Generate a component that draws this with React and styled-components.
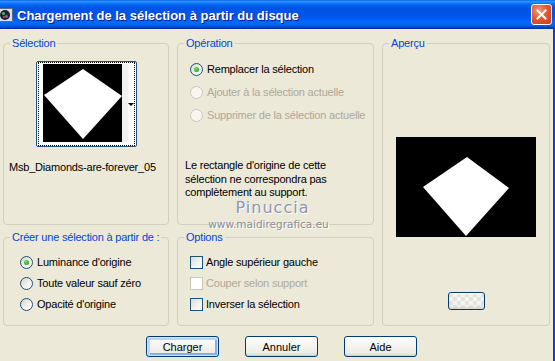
import React from "react";
import styled, { createGlobalStyle } from "styled-components";

const Global = createGlobalStyle`
  html, body { margin: 0; padding: 0; background: #ece9d8; overflow: hidden; }
  * { box-sizing: border-box; }
`;

const Window = styled.div`
  position: relative;
  width: 555px;
  height: 361px;
  display: flex;
  flex-direction: column;
  background: #ece9d8;
  font-family: "Liberation Sans", Arial, sans-serif;
  font-size: 11px;
  letter-spacing: -0.2px;
  color: #000;
`;

const TitleBar = styled.div`
  height: 29px;
  flex: none;
  display: flex;
  align-items: center;
  padding-right: 3px;
  letter-spacing: 0;
  background: linear-gradient(
    to bottom,
    #0058ee 0%, #3593ff 4%, #288eff 7%, #127dff 10%, #036ffc 14%,
    #0262ee 18%, #0057e5 24%, #0054e3 30%, #0055eb 56%, #005bf5 66%,
    #026afe 76%, #0062ef 86%, #0052d6 92%, #0040ab 96%, #003092 100%
  );
`;

const TitleIcon = styled.svg`
  flex: none;
  margin-left: -1px;
  margin-top: 1px;
`;

const TitleText = styled.div`
  flex: 1;
  margin-left: 4px;
  margin-top: 1px;
  color: #fff;
  font-family: "Liberation Sans", Arial, sans-serif;
  font-weight: bold;
  font-size: 13px;
  text-shadow: 1px 1px 0 #0a1a8a;
  white-space: nowrap;
`;

const CloseButton = styled.div`
  width: 21px;
  height: 21px;
  border: 1px solid #fff;
  border-radius: 3px;
  display: flex;
  align-items: center;
  justify-content: center;
  background: radial-gradient(circle at 35% 30%, #f29a7c 0%, #e25a33 45%, #c9391a 100%);
`;

const Frame = styled.div`
  flex: 1;
  display: flex;
  flex-direction: column;
  border-right: 2px solid #0a3fd6;
`;

const Body = styled.div`
  display: grid;
  grid-template-columns: 166px 197px 168px;
  grid-template-rows: 188px 95px;
  column-gap: 8px;
  row-gap: 6px;
  padding: 8px 0 0 3px;
`;

const Group = styled.fieldset`
  margin: 0;
  padding: 0;
  min-width: 0;
  border: 1px solid #d0d0bf;
  border-radius: 4px;
  grid-column: ${(p) => p.$col};
  grid-row: ${(p) => p.$row};
`;

const Legend = styled.legend`
  margin-left: 6px;
  padding: 0 2px;
  font-size: 11px;
  line-height: 13px;
  white-space: nowrap;
  color: #0046d5;
`;

const SelectionInner = styled.div`
  display: flex;
  flex-direction: column;
  align-items: center;
  padding-top: 11px;
`;

const Thumb = styled.div`
  width: 101px;
  height: 86px;
  border: 1px solid #1c5180;
  border-radius: 2px;
  background: #fff;
  padding: 0 1px 0 1px;
`;

const FocusRect = styled.div`
  height: 100%;
  border: 1px dotted #000;
  display: flex;
  padding: 1px 0 0 4px;
`;

const ThumbImage = styled.svg`
  flex: none;
  display: block;
`;

const ThumbStrip = styled.div`
  width: 8px;
  height: 78px;
  background: #f1f1ef;
`;

const ThumbArrow = styled.div`
  flex: 1;
  height: 78px;
  display: flex;
  align-items: center;
  justify-content: center;
  padding-top: 2px;
  &::after {
    content: "";
    border-left: 3px solid transparent;
    border-right: 3px solid transparent;
    border-top: 3px solid #000;
  }
`;

const FileName = styled.div`
  align-self: flex-start;
  margin: 14px 0 0 5px;
  line-height: 13px;
  white-space: nowrap;
`;

const OptionList = styled.div`
  display: flex;
  flex-direction: column;
  gap: ${(p) => p.$gap}px;
  padding: ${(p) => p.$top}px 0 0 ${(p) => p.$left}px;
`;

const OptionRow = styled.div`
  display: flex;
  align-items: center;
  height: 13px;
  line-height: 13px;
  white-space: nowrap;
  color: ${(p) => (p.$disabled ? "#aca899" : "#000")};
`;

const RadioCircle = styled.span`
  flex: none;
  width: 13px;
  height: 13px;
  margin-right: 4px;
  border-radius: 50%;
  border: 1px solid ${(p) => (p.$disabled ? "#cac8bb" : "#1c5180")};
  background: ${(p) =>
    p.$disabled ? "#f7f6f1" : "linear-gradient(135deg, #d6d3c6 0%, #f3f2ec 55%, #ffffff 100%)"};
  display: flex;
  align-items: center;
  justify-content: center;
  &::after {
    content: "";
    display: ${(p) => (p.$checked ? "block" : "none")};
    width: 5px;
    height: 5px;
    border-radius: 50%;
    background: radial-gradient(circle at 40% 35%, #7be879 0%, #2fb52c 55%, #178f15 100%);
  }
`;

const CheckBox = styled.span`
  flex: none;
  width: 13px;
  height: 13px;
  margin-right: 3px;
  border: 1px solid ${(p) => (p.$disabled ? "#cac8bb" : "#1c5180")};
  background: ${(p) =>
    p.$disabled ? "#fff" : "linear-gradient(135deg, #dcdcd5 0%, #f4f4f0 60%, #ffffff 100%)"};
`;

const Note = styled.p`
  margin: 37px 0 0 7px;
  line-height: 13.5px;
`;

const PreviewInner = styled.div`
  display: flex;
  flex-direction: column;
  align-items: center;
  padding-top: 87px;
`;

const PreviewImage = styled.svg`
  display: block;
  background: #000;
`;

const SmallButton = styled.div`
  margin-top: 55px;
  width: 37px;
  height: 18px;
  border: 1px solid #003c74;
  border-radius: 3px;
  background:
    repeating-conic-gradient(#f4f4f1 0% 25%, #e4e4de 0% 50%) 0 0 / 8px 8px;
  box-shadow: inset 0 -2px 2px rgba(200, 195, 180, 0.5), inset 0 1px 1px #fff;
`;

const ButtonRow = styled.div`
  display: flex;
  gap: 26px;
  padding: 10px 0 0 146px;
`;

const Button = styled.div`
  width: 73px;
  height: 21px;
  border: 1px solid #003c74;
  border-radius: 3px;
  display: flex;
  align-items: center;
  justify-content: center;
  font-size: 11px;
  letter-spacing: 0;
  background: linear-gradient(to bottom, #ffffff 0%, #f6f5f0 40%, #ecebe4 85%, #d8d3c6 100%);
  box-shadow: ${(p) =>
    p.$default
      ? "inset 0 0 0 1px #cee7ff, inset 1px 1px 0 2px #bcd4f6, inset -1px -1px 0 2px #89adeb"
      : "inset 0 -1px 0 #d6d0c5"};
`;

const Watermark = styled.div`
  position: absolute;
  left: 205px;
  top: 198px;
  width: 135px;
  display: flex;
  flex-direction: column;
  align-items: center;
  pointer-events: none;
  letter-spacing: 0;
`;

const WatermarkName = styled.span`
  font-family: "DejaVu Sans", sans-serif;
  font-size: 16px;
  line-height: 20px;
  letter-spacing: 1px;
  color: #8e96b4;
  text-shadow: 1px 1px 0 #fff;
`;

const WatermarkUrl = styled.span`
  font-family: "DejaVu Sans", sans-serif;
  font-size: 10.5px;
  line-height: 12px;
  margin-left: -8px;
  color: #8c8c98;
  text-shadow: 1px 1px 0 #fff;
`;

function Radio({ label, checked, disabled }) {
  return (
    <OptionRow $disabled={disabled}>
      <RadioCircle $checked={checked} $disabled={disabled} />
      {label}
    </OptionRow>
  );
}

function Check({ label, disabled }) {
  return (
    <OptionRow $disabled={disabled}>
      <CheckBox $disabled={disabled} />
      {label}
    </OptionRow>
  );
}

export default function App() {
  return (
    <Window>
      <Global />
      <TitleBar>
        <TitleIcon width="14" height="14" viewBox="0 0 14 14">
          <rect x="0.5" y="0.5" width="13" height="13" fill="#d8dde8" stroke="#5a6b8c" />
          <circle cx="6" cy="7" r="5" fill="#1e1f2c" />
          <circle cx="4.5" cy="5.5" r="1.6" fill="#3fbf5a" />
          <circle cx="7.5" cy="8.5" r="1.4" fill="#8a5fc8" />
          <circle cx="5" cy="9" r="1" fill="#e04a4a" />
        </TitleIcon>
        <TitleText>Chargement de la sélection à partir du disque</TitleText>
        <CloseButton>
          <svg width="11" height="11" viewBox="0 0 11 11">
            <path d="M1.5 1.5 L9.5 9.5 M9.5 1.5 L1.5 9.5" stroke="#fff" strokeWidth="2" strokeLinecap="square" />
          </svg>
        </CloseButton>
      </TitleBar>
      <Frame>
        <Body>
          <Group $col="1" $row="1">
            <Legend>Sélection</Legend>
            <SelectionInner>
              <Thumb>
                <FocusRect>
                  <ThumbImage width="79" height="78" viewBox="0 0 79 78">
                    <rect width="79" height="78" fill="#000" />
                    <polygon points="40,5 79,32 40,75 1,31" fill="#fff" />
                  </ThumbImage>
                  <ThumbStrip />
                  <ThumbArrow />
                </FocusRect>
              </Thumb>
              <FileName>Msb_Diamonds-are-forever_05</FileName>
            </SelectionInner>
          </Group>

          <Group $col="2" $row="1">
            <Legend>Opération</Legend>
            <OptionList $gap={10} $top={13} $left={12}>
              <Radio label="Remplacer la sélection" checked />
              <Radio label="Ajouter à la sélection actuelle" disabled />
              <Radio label="Supprimer de la sélection actuelle" disabled />
            </OptionList>
            <Note>
              Le rectangle d'origine de cette
              <br />
              sélection ne correspondra pas
              <br />
              complètement au support.
            </Note>
          </Group>

          <Group $col="3" $row="1 / span 2">
            <Legend>Aperçu</Legend>
            <PreviewInner>
              <PreviewImage width="140" height="100" viewBox="0 0 140 100">
                <polygon points="71,20 113,51 70,99 27,50" fill="#fff" />
              </PreviewImage>
              <SmallButton />
            </PreviewInner>
          </Group>

          <Group $col="1" $row="2">
            <Legend>Créer une sélection à partir de :</Legend>
            <OptionList $gap={8} $top={12} $left={16}>
              <Radio label="Luminance d'origine" checked />
              <Radio label="Toute valeur sauf zéro" />
              <Radio label="Opacité d'origine" />
            </OptionList>
          </Group>

          <Group $col="2" $row="2">
            <Legend>Options</Legend>
            <OptionList $gap={8} $top={12} $left={12}>
              <Check label="Angle supérieur gauche" />
              <Check label="Couper selon support" disabled />
              <Check label="Inverser la sélection" />
            </OptionList>
          </Group>
        </Body>
        <ButtonRow>
          <Button $default>Charger</Button>
          <Button>Annuler</Button>
          <Button>Aide</Button>
        </ButtonRow>
      </Frame>
      <Watermark>
        <WatermarkName>Pinuccia</WatermarkName>
        <WatermarkUrl>www.maidiregrafica.eu</WatermarkUrl>
      </Watermark>
    </Window>
  );
}
